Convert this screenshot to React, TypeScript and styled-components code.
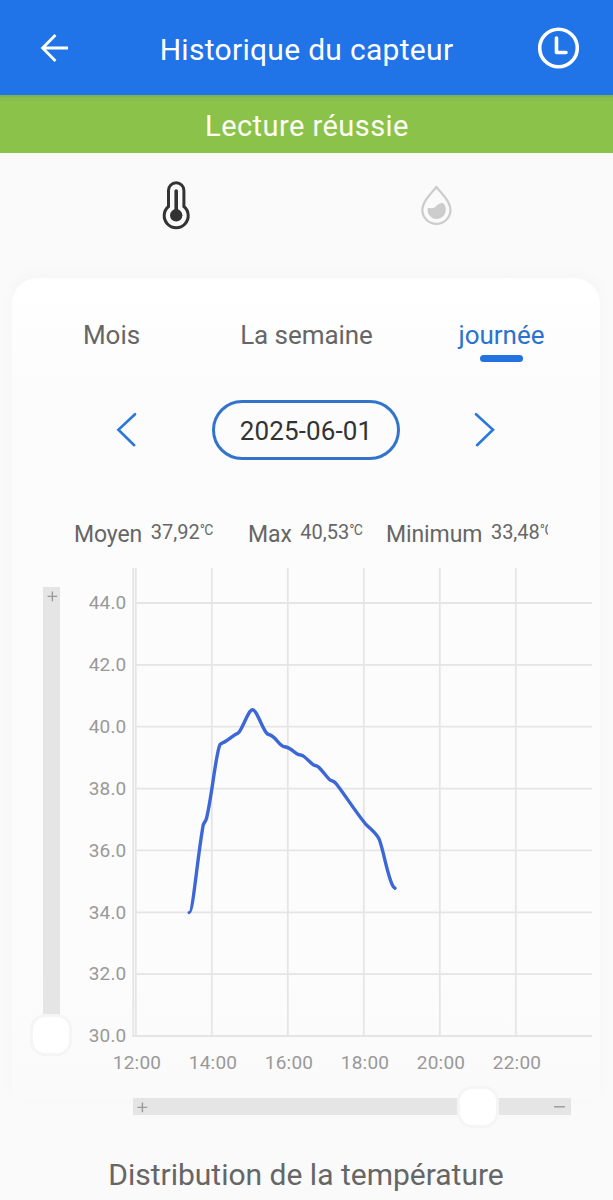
import React from "react";
import styled, { createGlobalStyle } from "styled-components";

const GlobalStyle = createGlobalStyle`
  * { box-sizing: border-box; }
  body { margin: 0; background: #fafafa; font-family: Roboto, "Liberation Sans", sans-serif; }
  button { font: inherit; color: inherit; background: none; border: 0; padding: 0; margin: 0; display: block; }
  svg { display: block; }
`;

const Screen = styled.div`
  width: 613px;
  height: 1200px;
  overflow: hidden;
  display: flex;
  flex-direction: column;
  background: #fafafa;
`;

const AppBar = styled.header`
  flex: none;
  height: 95px;
  padding: 0 31px 0 39px;
  display: grid;
  grid-template-columns: 44px 1fr 44px;
  align-items: center;
  background: #2074e8;
  color: #fff;
`;

const Title = styled.h1`
  margin: 4px 8px 0 0;
  text-align: center;
  font-size: 30px;
  line-height: 36px;
  font-weight: 400;
  letter-spacing: 0.3px;
  white-space: nowrap;
`;

const Banner = styled.div`
  flex: none;
  height: 58px;
  display: flex;
  align-items: center;
  justify-content: center;
  padding: 3px 0 0 1px;
  background: linear-gradient(#7cae52 0, #88bd4c 3px, #8bc34a 7px);
  color: #fffef5;
  font-size: 29px;
  letter-spacing: 0.45px;
`;

const Sensors = styled.nav`
  flex: none;
  height: 125px;
  padding: 27px 47px 0 46px;
  display: grid;
  grid-template-columns: 1fr 1fr;
  justify-items: center;
  align-items: start;
`;

const Card = styled.section`
  flex: none;
  height: 822px;
  margin: 0 13px 0 12px;
  border-radius: 26px 26px 0 0;
  background: linear-gradient(#fff 0, #fefefe 40px, #fcfcfc 100px, #fcfcfc 700px, #fafafa 822px);
  box-shadow: 0 -4px 16px rgba(0, 0, 0, 0.024);
`;

const Tabs = styled.div`
  display: grid;
  grid-template-columns: repeat(3, 195px);
  justify-items: center;
  height: 88px;
  padding: 39px 0 0 2px;
`;

const Tab = styled.button<{ $active?: boolean }>`
  display: flex;
  flex-direction: column;
  align-items: center;
  font-size: 26px;
  line-height: 36px;
  letter-spacing: -0.05px;
  color: ${(p) => (p.$active ? "#2a72cf" : "#666")};
  &::after {
    content: "";
    width: 43px;
    height: 7px;
    margin-top: 2px;
    border-radius: 4px;
    background: ${(p) => (p.$active ? "#2472e0" : "transparent")};
  }
`;

const DateRow = styled.div`
  display: flex;
  align-items: center;
  justify-content: space-between;
  height: 60px;
  margin: 34px 104px 0 104px;
`;

const DatePill = styled.button`
  width: 188px;
  height: 60px;
  border: 3px solid #3274cc;
  border-radius: 30px;
  color: #333;
  font-size: 26px;
  letter-spacing: 0.1px;
  padding-top: 2px;
`;

const Stats = styled.div`
  display: flex;
  width: 474px;
  height: 36px;
  margin: 56px 0 0 62px;
  overflow: hidden;
  white-space: nowrap;
`;

const Stat = styled.div<{ $width: number }>`
  flex: none;
  display: flex;
  width: ${(p) => p.$width}px;
  color: #666;
`;

const StatName = styled.span`
  font-size: 23px;
  line-height: 37px;
  letter-spacing: -0.1px;
  margin-right: 8.6px;
`;

const StatValue = styled.span`
  font-size: 20px;
  line-height: 32px;
`;

const Unit = styled.sup`
  font-size: 14px;
  line-height: 1;
  letter-spacing: -0.6px;
  vertical-align: 4px;
`;

const ChartRow = styled.div`
  display: flex;
  margin-top: 15px;
`;

const Track = styled.div<{ $vertical?: boolean }>`
  flex: none;
  display: flex;
  flex-direction: ${(p) => (p.$vertical ? "column" : "row")};
  align-items: center;
  width: ${(p) => (p.$vertical ? "17px" : "438px")};
  height: ${(p) => (p.$vertical ? "469px" : "17px")};
  margin: ${(p) => (p.$vertical ? "20px 0 0 30.6px" : "-2px 0 0 133px")};
  background: #e5e5e5;
`;

const Thumb = styled.div`
  flex: none;
  width: 42px;
  height: 42px;
  border: 3px solid #f5f5f5;
  border-radius: 15px;
  background: #fff;
`;

const Spacer = styled.div<{ $size?: number }>`
  flex: ${(p) => (p.$size ? `0 0 ${p.$size}px` : "1")};
`;

const Chart = styled.svg`
  flex: none;
  margin-left: 20.4px;
  font-size: 19px;
  fill: #999;
  letter-spacing: 0.2px;
`;

const Section = styled.h2`
  margin: 40px 1px 0 0;
  text-align: center;
  font-size: 30px;
  line-height: 40px;
  font-weight: 400;
  color: #666;
  white-space: nowrap;
`;

const Mark = ({ minus }: { minus?: boolean }) => (
  <svg width="17" height="17" viewBox="0 0 17 17" fill="none" stroke="#999" strokeWidth="1.4">
    {minus ? <path d="M-1 8.8H11" /> : <path d="M4.6 9.4H14.2M9.4 4.6V14.2" />}
  </svg>
);

const Chevron = ({ right }: { right?: boolean }) => (
  <svg width="22" height="36" viewBox="0 0 22 36" fill="none" stroke="#2a78dc" strokeWidth="2.6" strokeLinecap="round">
    {right ? <path d="M2 2.2L19 17.8L3 33.2" /> : <path d="M19 2.2L2.4 17.8L18.2 33.2" />}
  </svg>
);

const hours = [12, 14, 16, 18, 20, 22];
const degrees = [44, 42, 40, 38, 36, 34, 32, 30];

const curve =
  "M189.2 912.6C193 913 197 860 203.2 825C204.6 821.5 205.7 821.5 206.6 818C212 796 216 752 220 744.5C221.5 742.6 223.5 742.8 226 741C231 738 233.5 735 238 733.2C242.5 730 248 709.8 252.6 709.8C257 709.8 263 731 267.5 734C270 734.5 272 735.5 274.5 738C278 741.5 280 745 283 746.3C285.5 747 287 747 289.5 748.5C293.5 751 295.5 753.2 298.5 754.6C300.5 755 302 755 304 756.5C308 759.5 311 763.5 314 765.2C316 765.8 317 765.5 319 767.5C323.5 772 327 777.5 330 780C332 781 333.5 780.8 336 783.5C345 795 355 811 365 823.3C370 829 376 832.5 379.3 839.5C384 852 388 879 393.4 886.8L395 888.2";

export default function App() {
  return (
    <>
      <GlobalStyle />
      <Screen>
        <AppBar>
          <button aria-label="Retour">
            <svg width="32" height="32" viewBox="0 0 32 32" fill="none" stroke="#fff" strokeWidth="2.8">
              <path d="M29 16H4M16.5 3L3.6 16L16.5 29" />
            </svg>
          </button>
          <Title>Historique du capteur</Title>
          <button aria-label="Horloge">
            <svg width="44" height="44" viewBox="0 0 44 44" fill="none" stroke="#fff" strokeWidth="3.6">
              <circle cx="20.5" cy="22" r="18.8" />
              <path d="M18.5 12V26.5H28" strokeLinecap="round" strokeLinejoin="round" />
            </svg>
          </button>
        </AppBar>
        <Banner>Lecture réussie</Banner>
        <Sensors>
          <button aria-label="Température">
            <svg width="30" height="50" viewBox="0 0 30 50" fill="none" stroke="#333" strokeWidth="3">
              <path d="M7.5 10.4a7.7 7.7 0 0 1 15.4 0V26.5a12 12 0 1 1-15.4 0Z" />
              <path d="M15.2 11V34" strokeWidth="3.6" strokeLinecap="round" />
              <circle cx="15.2" cy="35.3" r="6.2" fill="#333" stroke="none" />
            </svg>
          </button>
          <button aria-label="Humidité">
            <svg width="32" height="50" viewBox="0 0 32 50" fill="none" stroke="#ccc" strokeWidth="2.2">
              <path d="M16.4 6.8C12.6 12.5 2.3 20.5 2.3 29.8a14 14 0 0 0 28.2 0C30.5 20.5 20.2 12.5 16.4 6.8Z" strokeLinejoin="round" />
              <path d="M7.9 28.2C9.3 27.4 12 29.3 15.2 26.9C17.6 25 19.5 22.5 22.4 23C25 23.8 25.8 27 25.8 29.8A9.1 9.1 0 0 1 7.6 30.2C7.5 29 7.3 28.6 7.9 28.2Z" fill="#ccc" stroke="none" />
            </svg>
          </button>
        </Sensors>
        <Card>
          <Tabs>
            <Tab>Mois</Tab>
            <Tab>La semaine</Tab>
            <Tab $active>journée</Tab>
          </Tabs>
          <DateRow>
            <button aria-label="Précédent"><Chevron /></button>
            <DatePill>2025-06-01</DatePill>
            <button aria-label="Suivant"><Chevron right /></button>
          </DateRow>
          <Stats>
            <Stat $width={174}><StatName>Moyen</StatName><StatValue>37,92<Unit>°C</Unit></StatValue></Stat>
            <Stat $width={138}><StatName>Max</StatName><StatValue>40,53<Unit>°C</Unit></StatValue></Stat>
            <Stat $width={180}><StatName>Minimum</StatName><StatValue>33,48<Unit>°C</Unit></StatValue></Stat>
          </Stats>
          <ChartRow>
            <Track $vertical>
              <Mark />
              <Spacer />
              <Thumb />
            </Track>
            <Chart width="515" height="510" viewBox="80 567 515 510">
              <g stroke="#e5e5e5" strokeWidth="1.8">
                <path d="M133.2 568V1036" />
                {hours.map((h, i) => (
                  <path key={h} d={`M${135.8 + i * 76} 568V1036`} />
                ))}
                {degrees.map((t, i) => (
                  <path key={t} d={`M${t === 30 ? 132.4 : 135} ${603 + i * 61.86}H592`} />
                ))}
              </g>
              {degrees.map((t, i) => (
                <text key={t} x="126.5" y={609.3 + i * 61.86} textAnchor="end">{t.toFixed(1)}</text>
              ))}
              {hours.map((h, i) => (
                <text key={h} x={137 + i * 76} y="1068.5" textAnchor="middle">{h}:00</text>
              ))}
              <path d={curve} fill="none" stroke="#3c67d6" strokeWidth="3.4" strokeLinecap="round" strokeLinejoin="round" />
            </Chart>
          </ChartRow>
        </Card>
        <Track>
          <Mark />
          <Spacer $size={307} />
          <Thumb />
          <Spacer />
          <Mark minus />
        </Track>
        <Section>Distribution de la température</Section>
      </Screen>
    </>
  );
}
